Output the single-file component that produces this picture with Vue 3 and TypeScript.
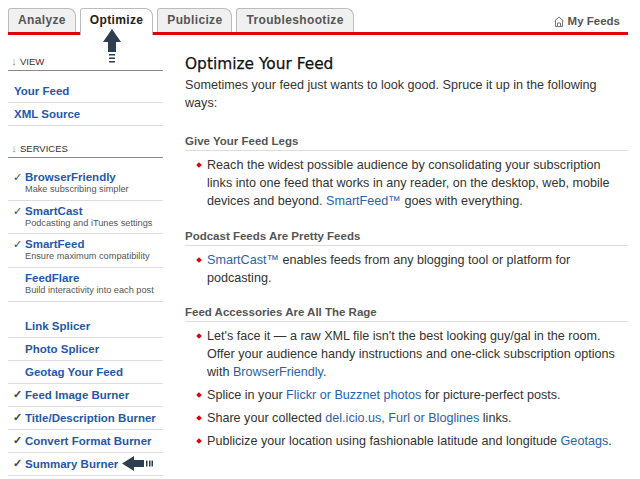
<template>
  <div class="page">
    <div class="topbar">
      <div class="tabs">
        <div v-for="tab in tabs" :key="tab" class="tab" :class="{ active: tab === 'Optimize' }">{{ tab }}</div>
      </div>
      <div class="my-feeds">
        <svg width="10" height="11" viewBox="0 0 10 11" fill="none" stroke="#777" stroke-width="1">
          <path d="M0.5 5 L5 1 L9.5 5 M1.5 4.500 V10.500 H8.500 V4.500 M3.500 10.500 V7 H6.500 V10.500" />
        </svg>
        My Feeds
      </div>
      <svg class="arrow-up" width="18" height="36" viewBox="0 0 18 36" fill="#2c3e50">
        <path d="M9 0 L18 13 H13 V23 H5 V13 H0 Z" />
        <rect x="6" y="25" width="6" height="1.500" />
        <rect x="6" y="28.500" width="6" height="1.500" />
        <rect x="6" y="32" width="6" height="1.500" />
      </svg>
    </div>
    <div class="body">
      <aside class="sidebar">
        <div class="side-head"><span class="down">↓</span>VIEW</div>
        <div class="view-list">
          <a v-for="item in viewItems" :key="item" class="row">{{ item }}</a>
        </div>
        <div class="side-head services-head"><span class="down">↓</span>SERVICES</div>
        <div class="services">
          <div v-for="s in services" :key="s.name" class="service">
            <span class="check">{{ s.on ? '✓' : '' }}</span>
            <div>
              <a class="service-name">{{ s.name }}</a>
              <div class="service-sub">{{ s.sub }}</div>
            </div>
          </div>
        </div>
        <div class="burners">
          <div v-for="b in burners" :key="b.name" class="burner">
            <span class="check">{{ b.on ? '✓' : '' }}</span>
            <a>{{ b.name }}</a>
            <svg v-if="b.name === 'Summary Burner'" class="arrow-left" width="31" height="15" viewBox="0 0 31 15" fill="#2c3e50">
              <path d="M0 7.500 L12 0 V4 H22 V11 H12 V15 Z" />
              <rect x="24" y="4.500" width="1.500" height="6" />
              <rect x="27" y="4.500" width="1.500" height="6" />
              <rect x="29.500" y="4.500" width="1.500" height="6" />
            </svg>
          </div>
        </div>
      </aside>
      <main class="content">
        <h1>Optimize Your Feed</h1>
        <p class="intro">Sometimes your feed just wants to look good. Spruce it up in the following ways:</p>
        <h2>Give Your Feed Legs</h2>
        <ul>
          <li>Reach the widest possible audience by consolidating your subscription links into one feed that works in any reader, on the desktop, web, mobile devices and beyond. <a>SmartFeed™</a> goes with everything.</li>
        </ul>
        <h2>Podcast Feeds Are Pretty Feeds</h2>
        <ul>
          <li><a>SmartCast™</a> enables feeds from any blogging tool or platform for podcasting.</li>
        </ul>
        <h2>Feed Accessories Are All The Rage</h2>
        <ul>
          <li>Let's face it — a raw XML file isn't the best looking guy/gal in the room. Offer your audience handy instructions and one-click subscription options with <a>BrowserFriendly</a>.</li>
          <li>Splice in your <a>Flickr or Buzznet photos</a> for picture-perfect posts.</li>
          <li>Share your collected <a>del.icio.us, Furl or Bloglines</a> links.</li>
          <li>Publicize your location using fashionable latitude and longitude <a>Geotags</a>.</li>
        </ul>
      </main>
    </div>
  </div>
</template>

<script setup lang="ts">
const tabs = ['Analyze', 'Optimize', 'Publicize', 'Troubleshootize']
const viewItems = ['Your Feed', 'XML Source']
const services = [
  { name: 'BrowserFriendly', sub: 'Make subscribing simpler', on: true },
  { name: 'SmartCast', sub: 'Podcasting and iTunes settings', on: true },
  { name: 'SmartFeed', sub: 'Ensure maximum compatibility', on: true },
  { name: 'FeedFlare', sub: 'Build interactivity into each post', on: false },
]
const burners = [
  { name: 'Link Splicer', on: false },
  { name: 'Photo Splicer', on: false },
  { name: 'Geotag Your Feed', on: false },
  { name: 'Feed Image Burner', on: true },
  { name: 'Title/Description Burner', on: true },
  { name: 'Convert Format Burner', on: true },
  { name: 'Summary Burner', on: true },
]
</script>

<style>
html, body {
  margin: 0;
  background: #fff;
}
</style>

<style scoped>
.page {
  width: 640px;
  height: 479px;
  overflow: hidden;
  box-sizing: border-box;
  padding: 0 12px 0 8px;
  font-family: "Liberation Sans", Arial, sans-serif;
  color: #333;
}
.topbar {
  position: relative;
  display: flex;
  justify-content: space-between;
  padding-top: 8px;
  height: 24px;
  border-bottom: 3px solid #e0000b;
}
.tabs {
  display: flex;
  gap: 4px;
  height: 24px;
}
.tab {
  box-sizing: border-box;
  height: 24px;
  padding: 0 9px;
  background: #f0f0f0;
  border: 1px solid #bbb;
  border-bottom: 0;
  border-radius: 3px 8px 0 0;
  font-size: 12px;
  font-weight: bold;
  letter-spacing: 0.35px;
  line-height: 23px;
  color: #555;
}
.tab.active {
  height: 27px;
  background: #fff;
  color: #222;
  position: relative;
}
.my-feeds {
  display: flex;
  align-items: center;
  gap: 4px;
  height: 26px;
  margin-right: 8px;
  font-size: 11.500px;
  font-weight: bold;
  color: #555;
}
.arrow-up {
  position: absolute;
  left: 95px;
  top: 29px;
}
.body {
  display: flex;
  gap: 22px;
}
.sidebar {
  width: 155px;
  flex: none;
}
.side-head {
  height: 18px;
  margin-top: 17px;
  border-bottom: 1px solid #888;
  font-size: 9.500px;
  color: #333;
  line-height: 18px;
}
.services-head {
  margin-top: 13px;
  margin-bottom: 9px;
}
.down {
  display: inline-block;
  width: 12px;
  text-align: center;
  font-size: 11px;
  color: #8a9a8a;
}
.view-list {
  margin-top: 9px;
}
.row {
  display: block;
  height: 22px;
  padding-left: 6px;
  border-bottom: 1px solid #ddd;
  font-size: 11.500px;
  font-weight: bold;
  line-height: 22px;
  color: #2558a8;
}
.service {
  display: flex;
  box-sizing: border-box;
  height: 33.670px;
  border-bottom: 1px solid #ddd;
  padding-top: 4px;
}
.check {
  flex: none;
  width: 17px;
  padding-left: 5px;
  box-sizing: border-box;
  font-size: 11px;
  color: #444;
}
.service-name {
  display: block;
  font-size: 11.500px;
  line-height: 13px;
  font-weight: bold;
  color: #2558a8;
}
.service-sub {
  font-size: 9.200px;
  line-height: 11px;
  color: #555;
}
.burners {
  margin-top: 13px;
}
.burner {
  display: flex;
  align-items: center;
  box-sizing: border-box;
  height: 23px;
  border-bottom: 1px solid #ddd;
  font-size: 11.500px;
  font-weight: bold;
  color: #2558a8;
}
.arrow-left {
  margin-left: 4px;
}
.content {
  width: 443px;
  font-size: 12.600px;
  line-height: 18px;
}
h1 {
  margin: 20px 0 0;
  font-family: "DejaVu Sans", sans-serif;
  font-size: 15.400px;
  font-weight: 500;
  -webkit-text-stroke: 0.25px #111;
  line-height: 18px;
  color: #111;
}
.intro {
  margin: 3px 0 20px;
}
h2 {
  margin: 0;
  border-bottom: 1px solid #ddd;
  font-size: 11.500px;
  font-weight: bold;
  color: #555;
}
ul {
  list-style: none;
  margin: 5px 0 16.500px;
  padding: 0 0 0 22px;
}
li {
  position: relative;
  margin-bottom: 5px;
}
li::before {
  content: "";
  position: absolute;
  left: -10px;
  top: 7px;
  width: 4px;
  height: 4px;
  background: #e0000b;
  transform: rotate(45deg);
}
li a {
  color: #2a63a8;
}
</style>
